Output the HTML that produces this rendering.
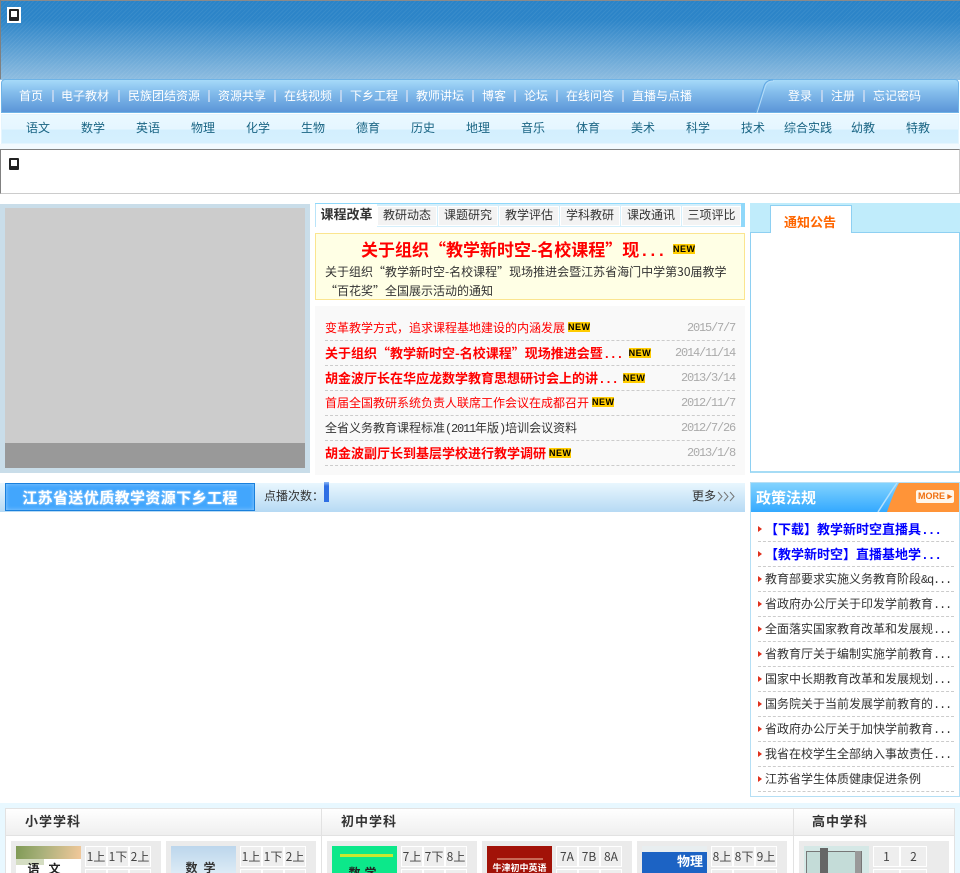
<!DOCTYPE html>
<html lang="zh"><head><meta charset="utf-8"><title>江苏省教学资源</title>
<style>
html,body{margin:0;padding:0;background:#fff}
#p{position:relative;width:960px;height:873px;overflow:hidden;font:12px/14px "WenQuanYi Zen Hei","Noto Sans CJK SC",sans-serif;color:#333}
#p div,#p span.a{position:absolute;white-space:nowrap}
.nv{color:#fff;top:89px}
.sp{top:90px;width:2px;height:12px;background:#b9d3f0}
.sb{color:#1a6584;top:121px}
.tab{top:206px;height:20px;background:#f3f3f3;line-height:15px;text-align:center;color:#333;border:1px solid #fff;box-sizing:border-box}
.n{display:inline-block;width:22px;height:10px;background:#fc0;color:#000;font:bold 9px/10px "Liberation Sans",sans-serif;text-align:center;vertical-align:2px;margin-left:3px;letter-spacing:.5px}
.e{font-family:"Liberation Mono",monospace;letter-spacing:-1.2px}
.r{left:325px;width:410px;height:25px;border-bottom:1px dashed #ccc;box-sizing:border-box;line-height:24px;color:#333}
.r b{color:#f00;font-size:13px}
.red{color:#f00}
.d{position:absolute;right:0;top:0;color:#aaa;font-family:"Liberation Mono",monospace;letter-spacing:-1.2px}
.q{left:758px;width:196px;height:25px;border-bottom:1px dashed #ccc;box-sizing:border-box;line-height:24px;padding-left:7px;color:#333}
.q:before{content:"";position:absolute;left:0;top:9px;width:0;height:0;border-left:4px solid #e0301c;border-top:3px solid transparent;border-bottom:3px solid transparent}
.q b{color:#00f;font-size:13px}
.h{top:814px;font-weight:bold;color:#333;font-size:13px;letter-spacing:1px}
.it{top:841px;width:150px;height:32px;background:#ebebeb}
.c{top:846px;width:65px;height:27px}
.l{top:846px;height:21px;background:#eee;border:1px solid #fff;box-sizing:border-box;text-align:center;line-height:19px;color:#444;font-size:12px}
.l2{top:869px;height:21px;background:#eee;border:1px solid #fff;box-sizing:border-box}
</style></head><body><div id="p">

<div style="left:0;top:0;width:960px;height:80px;background:repeating-linear-gradient(135deg,rgba(255,255,255,.06) 0 1px,rgba(255,255,255,0) 1px 3px),linear-gradient(#2a83c7 0,#2d85c8 20px,#8fbde0 80px)"></div>
<div style="left:0;top:0;width:960px;height:1px;background:#8a8a8a"></div>
<div style="left:0;top:0;width:1px;height:79px;background:#808080"></div>
<div style="left:7px;top:7px;width:14px;height:16px;background:#fff"></div>
<div style="left:9px;top:9px;width:10px;height:12px;background:#222;border-radius:1px"></div>
<div style="left:11px;top:11px;width:6px;height:6px;background:#fff"></div>

<div style="left:1px;top:79px;width:958px;height:34px;box-sizing:border-box;border:1px solid #6fb3e6;border-radius:4px 4px 0 0;background:linear-gradient(#a6daf9 0,#84bdec 12px,#5b95d8 100%)"></div>
<svg style="position:absolute;left:750px;top:79px" width="40" height="34"><path d="M5.5 34 L14 7 Q16 1 23 1" fill="none" stroke="#5fa6e2" stroke-width="1"/><path d="M7 34 L15.5 7 Q17.5 2 24 2" fill="none" stroke="#b4dcf8" stroke-width="1"/></svg>

<div class="nv" style="left:19px">首页</div><div class="sp" style="left:52px"></div>
<div class="nv" style="left:61px">电子教材</div><div class="sp" style="left:118px"></div>
<div class="nv" style="left:128px">民族团结资源</div><div class="sp" style="left:208px"></div>
<div class="nv" style="left:218px">资源共享</div><div class="sp" style="left:274px"></div>
<div class="nv" style="left:284px">在线视频</div><div class="sp" style="left:340px"></div>
<div class="nv" style="left:350px">下乡工程</div><div class="sp" style="left:406px"></div>
<div class="nv" style="left:416px">教师讲坛</div><div class="sp" style="left:472px"></div>
<div class="nv" style="left:482px">博客</div><div class="sp" style="left:514px"></div>
<div class="nv" style="left:524px">论坛</div><div class="sp" style="left:556px"></div>
<div class="nv" style="left:566px">在线问答</div><div class="sp" style="left:622px"></div>
<div class="nv" style="left:632px">直播与点播</div>
<div class="nv" style="left:788px">登录</div><div class="sp" style="left:821px"></div>
<div class="nv" style="left:831px">注册</div><div class="sp" style="left:863px"></div>
<div class="nv" style="left:873px">忘记密码</div>

<div style="left:1px;top:114px;width:958px;height:30px;box-sizing:border-box;border:1px solid #e4f5fe;background:linear-gradient(#e9f8ff 0,#e6f6ff 14px,#d3effe 15px,#d6f0fe 100%)"></div>
<div style="left:0;top:144px;width:960px;height:5px;background:#f3fafe"></div>
<div class="sb" style="left:26px">语文</div><div class="sb" style="left:81px">数学</div><div class="sb" style="left:136px">英语</div><div class="sb" style="left:191px">物理</div><div class="sb" style="left:246px">化学</div><div class="sb" style="left:301px">生物</div><div class="sb" style="left:356px">德育</div><div class="sb" style="left:411px">历史</div><div class="sb" style="left:466px">地理</div><div class="sb" style="left:521px">音乐</div><div class="sb" style="left:576px">体育</div><div class="sb" style="left:631px">美术</div><div class="sb" style="left:686px">科学</div><div class="sb" style="left:741px">技术</div><div class="sb" style="left:784px">综合实践</div><div class="sb" style="left:851px">幼教</div><div class="sb" style="left:906px">特教</div>

<div style="left:0;top:149px;width:960px;height:45px;box-sizing:border-box;border:1px solid;border-color:#808080 #ccc #ccc #808080;background:#fff"></div>
<div style="left:9px;top:158px;width:10px;height:12px;background:#222;border-radius:1px"></div>
<div style="left:11px;top:160px;width:6px;height:6px;background:#fff"></div>

<div style="left:0;top:204px;width:310px;height:269px;background:#c9dde9"></div>
<div style="left:5px;top:208px;width:300px;height:235px;background:#ccc"></div>
<div style="left:5px;top:443px;width:300px;height:25px;background:#999"></div>

<div style="left:315px;top:203px;width:430px;height:24px;background:#8fd8fa"></div>
<div style="left:315px;top:204px;width:62px;height:23px;background:#fff;border-left:1px solid #b9e4f9;box-sizing:border-box;line-height:20px;text-align:center;font-weight:bold;font-size:13px;color:#333">课程改革</div>
<div style="left:377px;top:204px;width:364px;height:23px;background:#d5effb"></div>
<div class="tab" style="left:377px;width:60px">教研动态</div>
<div class="tab" style="left:438px;width:60px">课题研究</div>
<div class="tab" style="left:499px;width:60px">教学评估</div>
<div class="tab" style="left:560px;width:60px">学科教研</div>
<div class="tab" style="left:621px;width:60px">课改通讯</div>
<div class="tab" style="left:682px;width:59px">三项评比</div>

<div style="left:315px;top:233px;width:430px;height:67px;box-sizing:border-box;border:1px solid #fbe58f;background:#ffffe5"></div>
<div class="red" style="left:361px;top:238px;font-size:17px;line-height:22px;font-weight:bold">关于组织“教学新时空-名校课程”现<span style="font-family:'Liberation Mono',monospace;letter-spacing:-1.7px">...</span></div>
<span class="a n" style="left:670px;top:244px">NEW</span>
<div style="left:325px;top:265px">关于组织“教学新时空-名校课程”现场推进会暨江苏省海门中学第30届教学</div>
<div style="left:325px;top:284px">“百花奖”全国展示活动的通知</div>

<div style="left:315px;top:306px;width:430px;height:169px;background:#f9f9f9"></div>
<div class="r" style="top:316px"><span class="red">变革教学方式，追求课程基地建设的内涵发展</span><span class="n">NEW</span><span class="d">2015/7/7</span></div>
<div class="r" style="top:341px"><b>关于组织“教学新时空-名校课程”现场推进会暨<span class="e">...</span></b><span class="n" style="margin-left:6px">NEW</span><span class="d">2014/11/14</span></div>
<div class="r" style="top:366px"><b>胡金波厅长在华应龙数学教育思想研讨会上的讲<span class="e">...</span></b><span class="n" style="margin-left:5px">NEW</span><span class="d">2013/3/14</span></div>
<div class="r" style="top:391px"><span class="red">首届全国教研系统负责人联席工作会议在成都召开</span><span class="n">NEW</span><span class="d">2012/11/7</span></div>
<div class="r" style="top:416px">全省义务教育课程标准<span class="e">(2011</span>年版<span class="e">)</span>培训会议资料<span class="d">2012/7/26</span></div>
<div class="r" style="top:441px"><b>胡金波副厅长到基层学校进行教学调研</b><span class="n">NEW</span><span class="d">2013/1/8</span></div>

<div style="left:750px;top:203px;width:210px;height:30px;background:#c0ecfb"></div>
<div style="left:750px;top:232px;width:210px;height:241px;box-sizing:border-box;border:1px solid #8ed0f2;border-bottom-width:2px;border-bottom-color:#a6dcf5;background:#fff"></div>
<div style="left:770px;top:205px;width:82px;height:28px;box-sizing:border-box;border:1px solid #8ed0f2;border-bottom:0;background:#fff;text-align:center;line-height:32px;color:#f60;font-weight:bold;font-size:13px;padding-right:2px">通知公告</div>

<div style="left:0;top:483px;width:745px;height:29px;background:linear-gradient(#e9f7fe,#b6daf4)"></div>
<div style="left:5px;top:483px;width:250px;height:28px;box-sizing:border-box;border:1px solid #1a80dc;background:#42a6fd;box-shadow:inset 0 0 4px #8fcbfd;color:#fff;font-weight:bold;font-size:15px;letter-spacing:.4px;line-height:27px;text-align:center;text-shadow:0 0 2px #bfe0ff">江苏省送优质教学资源下乡工程</div>
<div style="left:264px;top:489px">点播次数：</div>
<div style="left:324px;top:482px;width:5px;height:20px;background:linear-gradient(#8bb8f5 0,#2f6fe4 4px,#2f6fe4 100%)"></div>
<div style="left:692px;top:489px">更多</div>
<svg style="position:absolute;left:717px;top:491px" width="19" height="11"><path d="M1 1l4 4.5-4 4.5M7 1l4 4.5-4 4.5M13 1l4 4.5-4 4.5" fill="none" stroke="#777" stroke-width="1"/></svg>

<div style="left:750px;top:482px;width:210px;height:315px;box-sizing:border-box;border:1px solid #b5dff5;background:#fff"></div>
<div style="left:751px;top:483px;width:208px;height:29px;background:linear-gradient(#82d3fe,#33a9ff)"></div>
<svg style="position:absolute;left:870px;top:483px" width="89" height="29"><path d="M29 0H89V29H17Q24 8 29 0Z" fill="#ff9438"/><path d="M8 29Q20 10 27 0" fill="none" stroke="#b4e0fc" stroke-width="1.5"/></svg>
<div style="left:756px;top:489px;color:#fff;font-weight:bold;font-size:15px;line-height:18px">政策法规</div>
<div style="left:916px;top:490px;width:38px;height:13px;background:#fff6ea;border-radius:2px;color:#f07010;font:bold 9px/13px 'Liberation Sans',sans-serif;text-align:center">MORE ▸</div>

<div class="q" style="top:517px"><b>【下载】教学新时空直播具<span class="e">...</span></b></div>
<div class="q" style="top:542px"><b>【教学新时空】直播基地学<span class="e">...</span></b></div>
<div class="q" style="top:567px">教育部要求实施义务教育阶段<span class="e">&amp;q...</span></div>
<div class="q" style="top:592px">省政府办公厅关于印发学前教育<span class="e">...</span></div>
<div class="q" style="top:617px">全面落实国家教育改革和发展规<span class="e">...</span></div>
<div class="q" style="top:642px">省教育厅关于编制实施学前教育<span class="e">...</span></div>
<div class="q" style="top:667px">国家中长期教育改革和发展规划<span class="e">...</span></div>
<div class="q" style="top:692px">国务院关于当前发展学前教育的<span class="e">...</span></div>
<div class="q" style="top:717px">省政府办公厅关于加快学前教育<span class="e">...</span></div>
<div class="q" style="top:742px">我省在校学生全部纳入事故责任<span class="e">...</span></div>
<div class="q" style="top:767px">江苏省学生体质健康促进条例</div>

<div style="left:0;top:803px;width:960px;height:70px;background:#e8f8ff"></div>
<div style="left:5px;top:808px;width:950px;height:65px;box-sizing:border-box;border:1px solid #e2e2e2;border-bottom:0;background:#fff"></div>
<div style="left:6px;top:809px;width:948px;height:26px;background:linear-gradient(#fff,#efefef);border-bottom:1px solid #e2e2e2"></div>
<div style="left:321px;top:808px;width:1px;height:65px;background:#e2e2e2"></div>
<div style="left:793px;top:808px;width:1px;height:65px;background:#e2e2e2"></div>
<div class="h" style="left:25px">小学学科</div>
<div class="h" style="left:341px">初中学科</div>
<div class="h" style="left:812px">高中学科</div>

<div class="it" style="left:11px"></div>
<div class="it" style="left:166px"></div>
<div class="it" style="left:327px"></div>
<div class="it" style="left:482px"></div>
<div class="it" style="left:637px"></div>
<div class="it" style="left:799px"></div>

<div class="c" style="left:16px;background:#fff"></div>
<div style="left:16px;top:846px;width:65px;height:13px;background:linear-gradient(100deg,#7f9a55 0,#a8b07a 40%,#f2c89a 100%)"></div>
<div style="left:16px;top:859px;width:28px;height:6px;background:#b8c79a;opacity:.6"></div>
<div style="left:16px;top:862px;width:65px;text-align:center;font-weight:bold;color:#222;font-size:12px;letter-spacing:9px">语文</div>
<div class="c" style="left:171px;background:linear-gradient(#bcd6ec,#dcebf6)"></div>
<div style="left:171px;top:861px;width:65px;text-align:center;font-weight:bold;color:#333;font-size:12px;letter-spacing:6px">数学</div>
<div class="c" style="left:332px;background:#0ce88a"></div>
<div style="left:340px;top:854px;width:53px;height:3px;background:#c8e830"></div>
<div style="left:332px;top:866px;width:65px;text-align:center;font-weight:bold;color:#222;font-size:12px;letter-spacing:4px">数学</div>
<div class="c" style="left:487px;background:#a21208"></div>
<div style="left:497px;top:858px;width:46px;height:2px;background:#c96a58"></div>
<div style="left:487px;top:862px;width:65px;text-align:center;font-weight:bold;color:#fff;font-size:9px;line-height:12px">牛津初中英语</div>
<div class="c" style="left:642px;background:#1c63c4"></div>
<div style="left:642px;top:846px;width:65px;height:6px;background:#e8eef0"></div>
<div style="left:677px;top:853px;font-weight:bold;color:#fff;font-size:13px;line-height:15px">物理</div>
<div class="c" style="left:804px;background:#d5e8e6"></div>
<div style="left:806px;top:851px;width:56px;height:22px;box-sizing:border-box;border:1px solid #777;border-bottom:0;background:#c4dcd8"></div>
<div style="left:820px;top:848px;width:8px;height:25px;background:#666"></div>
<div style="left:855px;top:851px;width:6px;height:22px;background:#999"></div>

<div class="l" style="left:85px;width:22px">1上</div><div class="l" style="left:107px;width:22px">1下</div><div class="l" style="left:129px;width:22px">2上</div>
<div class="l2" style="left:85px;width:22px"></div><div class="l2" style="left:107px;width:22px"></div><div class="l2" style="left:129px;width:22px"></div>
<div class="l" style="left:240px;width:22px">1上</div><div class="l" style="left:262px;width:22px">1下</div><div class="l" style="left:284px;width:22px">2上</div>
<div class="l2" style="left:240px;width:22px"></div><div class="l2" style="left:262px;width:22px"></div><div class="l2" style="left:284px;width:22px"></div>
<div class="l" style="left:401px;width:22px">7上</div><div class="l" style="left:423px;width:22px">7下</div><div class="l" style="left:445px;width:22px">8上</div>
<div class="l2" style="left:401px;width:22px"></div><div class="l2" style="left:423px;width:22px"></div><div class="l2" style="left:445px;width:22px"></div>
<div class="l" style="left:556px;width:22px">7A</div><div class="l" style="left:578px;width:22px">7B</div><div class="l" style="left:600px;width:22px">8A</div>
<div class="l2" style="left:556px;width:22px"></div><div class="l2" style="left:578px;width:22px"></div><div class="l2" style="left:600px;width:22px"></div>
<div class="l" style="left:711px;width:22px">8上</div><div class="l" style="left:733px;width:22px">8下</div><div class="l" style="left:755px;width:22px">9上</div>
<div class="l2" style="left:711px;width:22px"></div><div class="l2" style="left:733px;width:44px"></div>
<div class="l" style="left:873px;width:27px">1</div><div class="l" style="left:900px;width:27px">2</div>
<div class="l2" style="left:873px;width:27px"></div><div class="l2" style="left:900px;width:27px"></div>
</div></body></html>
